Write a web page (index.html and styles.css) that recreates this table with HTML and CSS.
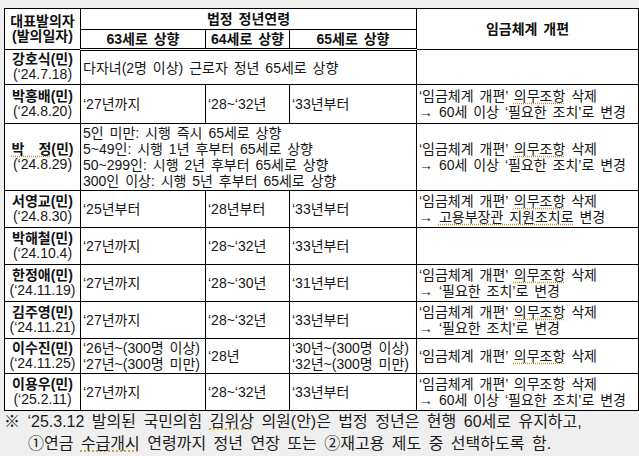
FILE: index.html
```html
<!DOCTYPE html>
<html lang="ko">
<head>
<meta charset="utf-8">
<title>정년연장 법안 비교</title>
<link rel="stylesheet" href="styles.css">
</head>
<body>
<table class="tbl">
  <colgroup>
    <col class="c1"><col class="c2"><col class="c3"><col class="c4"><col class="c5">
  </colgroup>
  <thead>
    <tr class="hr1">
      <th rowspan="2" class="who">대표발의자<br>(발의일자)</th>
      <th colspan="3">법정 정년연령</th>
      <th rowspan="2">임금체계 개편</th>
    </tr>
    <tr class="hr2">
      <th>63세로 상향</th>
      <th>64세로 상향</th>
      <th>65세로 상향</th>
    </tr>
  </thead>
  <tbody>
    <tr class="h34">
      <td class="who"><b>강호식(민)</b><br>(‘24.7.18)</td>
      <td colspan="3">다자녀(2명 이상) 근로자 정년 65세로 상향</td>
      <td></td>
    </tr>
    <tr class="h39">
      <td class="who"><b>박홍배(민)</b><br>(‘24.8.20)</td>
      <td>‘27년까지</td>
      <td>‘28~‘32년</td>
      <td>‘33년부터</td>
      <td>‘임금체계 개편’ <span class="sp">의무조항</span> 삭제<br>→ 60세 이상 ‘필요한 조치’로 변경</td>
    </tr>
    <tr class="h67">
      <td class="who"><b><span class="sp">박　정</span>(민)</b><br>(‘24.8.29)</td>
      <td colspan="3" class="multi">5인 미만: 시행 즉시 65세로 상향<br>5~49인: 시행 1년 후부터 65세로 상향<br>50~299인: 시행 2년 후부터 65세로 상향<br>300인 이상: 시행 5년 후부터 65세로 상향</td>
      <td>‘임금체계 개편’ <span class="sp">의무조항</span> 삭제<br>→ 60세 이상 ‘필요한 조치’로 변경</td>
    </tr>
    <tr class="h37">
      <td class="who"><b>서영교(민)</b><br>(‘24.8.30)</td>
      <td>‘25년부터</td>
      <td>‘28년부터</td>
      <td>‘33년부터</td>
      <td>‘임금체계 개편’ <span class="sp">의무조항</span> 삭제<br>→ <span class="sp">고용부장관 지원조치로</span> 변경</td>
    </tr>
    <tr class="h37">
      <td class="who"><b>박해철(민)</b><br>(‘24.10.4)</td>
      <td>‘27년까지</td>
      <td>‘28~‘32년</td>
      <td>‘33년부터</td>
      <td></td>
    </tr>
    <tr class="h37">
      <td class="who"><b>한정애(민)</b><br>(‘24.11.19)</td>
      <td>‘27년까지</td>
      <td>‘28~‘30년</td>
      <td>‘31년부터</td>
      <td>‘임금체계 개편’ <span class="sp">의무조항</span> 삭제<br>→ ‘필요한 조치’로 변경</td>
    </tr>
    <tr class="h37">
      <td class="who"><b>김주영(민)</b><br>(‘24.11.21)</td>
      <td>‘27년까지</td>
      <td>‘28~‘32년</td>
      <td>‘33년부터</td>
      <td>‘임금체계 개편’ <span class="sp">의무조항</span> 삭제<br>→ ‘필요한 조치’로 변경</td>
    </tr>
    <tr class="h35">
      <td class="who"><b>이수진(민)</b><br>(‘24.11.25)</td>
      <td>‘26년~(300명 이상)<br>‘27년~(300명 미만)</td>
      <td>‘28년</td>
      <td>‘30년~(300명 이상)<br>‘32년~(300명 미만)</td>
      <td>‘임금체계 개편’ <span class="sp">의무조항</span> 삭제</td>
    </tr>
    <tr class="h37">
      <td class="who"><b>이용우(민)</b><br>(‘25.2.11)</td>
      <td>‘27년까지</td>
      <td>‘28~‘32년</td>
      <td>‘33년부터</td>
      <td>‘임금체계 개편’ 의무조항 삭제<br>→ 60세 이상 ‘필요한 조치’로 변경</td>
    </tr>
  </tbody>
</table>
<div class="note">
  <p class="line">※ ‘25.3.12 발의된 국민의힘 <span class="sp">김위상</span> 의원(안)은 법정 정년은 현행 60세로 유지하고,</p>
  <p class="line indent">①연금 <span class="sp">수급개시</span> 연령까지 정년 연장 또는 ②재고용 제도 중 선택하도록 함.</p>
</div>
</body>
</html>
```

FILE: styles.css
```css
html, body {
  margin: 0;
  padding: 0;
}
body {
  background: #efefef;
  padding: 8px 2px 0 4px;
  font-family: "Liberation Sans", "Noto Sans CJK KR", sans-serif;
  font-size: 14px;
  color: #161616;
}
.tbl {
  border-collapse: collapse;
  table-layout: fixed;
  width: 634px;
  background: #fff;
}
.c1 { width: 76px; }
.c2 { width: 125px; }
.c3 { width: 84px; }
.c4 { width: 127px; }
.c5 { width: 222px; }

.tbl th,
.tbl td {
  border: 1px solid #000;
  padding: 0 2px;
  vertical-align: middle;
  line-height: 16px;
  word-spacing: 2px;
  text-align: left;
  white-space: nowrap;
  overflow: hidden;
}
.tbl th {
  font-weight: bold;
  text-align: center;
  color: #111;
}
.hr1 th { height: 20px; }
.hr2 th { height: 18px; border-bottom: 3px double #000; }
.tbl .who {
  text-align: center;
  line-height: 15px;
  padding: 0;
  word-spacing: 0;
}
.tbl .who b {
  color: #111;
}
.multi {
  line-height: 16.5px;
}
.h34 td { height: 33px; }
.h35 td { height: 34px; }
.h37 td { height: 36px; }
.h39 td { height: 38px; }
.h67 td { height: 66px; }

.sp {
  text-decoration: underline dotted #c8922e;
  text-underline-offset: 2px;
}

.note {
  font-size: 16px;
  color: #1b1b1b;
  word-spacing: 3px;
}
.line {
  margin: 0;
  line-height: 22px;
}
.indent {
  padding-left: 24px;
}
```
